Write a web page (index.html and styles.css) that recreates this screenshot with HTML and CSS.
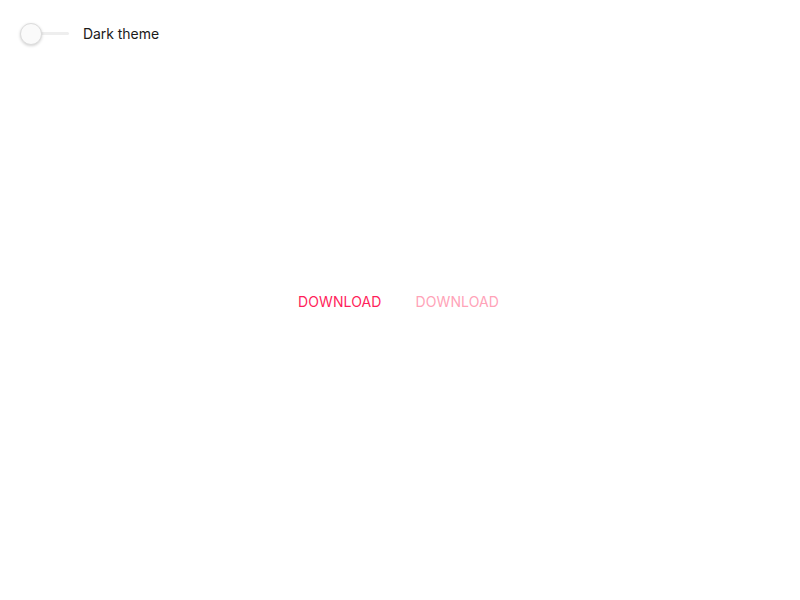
FILE: index.html
```html
<!DOCTYPE html>
<html>
<head>
<meta charset="utf-8">
<link rel="stylesheet" href="styles.css">
</head>
<body>
<div class="page">
  <label class="toggle-row">
    <span class="switch">
      <span class="track"></span>
      <span class="thumb"></span>
    </span>
    <span class="label">Dark theme</span>
  </label>
  <div class="center">
    <button class="btn">Download</button>
    <button class="btn btn-light">Download</button>
  </div>
</div>
</body>
</html>
```
FILE: styles.css
```css
html, body {
  margin: 0;
  padding: 0;
  background: #fff;
}
body {
  font-family: Inter, "Noto Sans", sans-serif;
  color: rgba(0,0,0,0.87);
}
.page {
  height: 600px;
  display: flex;
  flex-direction: column;
  position: relative;
}
.toggle-row {
  display: flex;
  align-items: center;
  padding: 22px 0 0 20px;
  height: 22px;
}
.switch {
  position: relative;
  width: 49px;
  height: 21px;
  display: flex;
  align-items: center;
}
.track {
  display: block;
  width: 100%;
  height: 3px;
  background: #eeeeee;
  border-radius: 2px;
}
.thumb {
  position: absolute;
  left: 0;
  top: 0;
  width: 20px;
  height: 20px;
  border-radius: 50%;
  background: #fafafa;
  border: 0.5px solid #dcdcdc;
  box-shadow: 0 1px 3px rgba(0,0,0,0.18);
}
.label {
  margin-left: 14px;
  font-size: 14px;
  color: #1a1a1a;
  letter-spacing: -0.05px;
}
.center {
  flex: 1;
  display: flex;
  align-items: center;
  justify-content: center;
  gap: 18px;
  padding-top: 3px;
  margin-top: -44px;
  padding-right: 3px;
}
.btn {
  font-family: Inter, "Noto Sans", sans-serif;
  font-size: 14px;
  text-transform: uppercase;
  background: none;
  border: none;
  padding: 6px 8px;
  color: #ff1f5b;
  letter-spacing: 0.1px;
  cursor: pointer;
}
.btn-light {
  color: #ffa3b8;
}
```
